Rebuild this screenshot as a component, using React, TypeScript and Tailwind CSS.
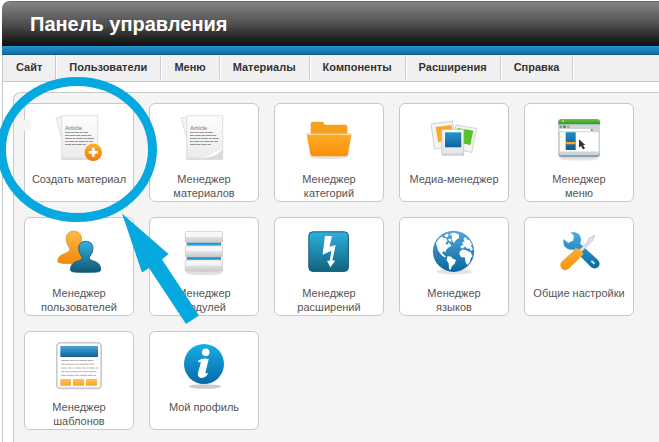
import type { ReactNode } from "react";

const menuItems = ["Сайт", "Пользователи", "Меню", "Материалы", "Компоненты", "Расширения", "Справка"];

const shortcuts: { label: string; icon: ReactNode }[] = [
	{ label: "Создать материал", icon: <ArticleIcon isNew /> },
	{ label: "Менеджер\nматериалов", icon: <ArticleIcon /> },
	{ label: "Менеджер\nкатегорий", icon: <FolderIcon /> },
	{ label: "Медиа-менеджер", icon: <PhotosIcon /> },
	{ label: "Менеджер\nменю", icon: <BrowserIcon /> },
	{ label: "Менеджер\nпользователей", icon: <UsersIcon /> },
	{ label: "Менеджер\nмодулей", icon: <ModulesIcon /> },
	{ label: "Менеджер\nрасширений", icon: <BoltIcon /> },
	{ label: "Менеджер\nязыков", icon: <GlobeIcon /> },
	{ label: "Общие настройки", icon: <ToolsIcon /> },
	{ label: "Менеджер\nшаблонов", icon: <TemplateIcon /> },
	{ label: "Мой профиль", icon: <InfoIcon /> },
];

export default function App() {
	return (
		<div className="relative flex min-h-screen flex-col overflow-hidden bg-white pt-px pl-0.5 font-['Liberation_Sans',Arial,sans-serif]">
			<header className="flex h-[45px] items-center rounded-tl-lg border-t border-[#666] bg-linear-to-b from-[#858585] via-[#505050] to-[#0e0e0e] pl-7">
				<h1 className="text-xl leading-6 font-bold text-white">Панель управления</h1>
			</header>
			<div className="h-[9px] border-b border-[#17597f] bg-linear-to-b from-[#2394cf] to-[#0c6eaa]" />

			<div className="flex flex-1 flex-col border-l border-[#c6c6c6]">
				<nav className="border-b border-[#c8c8c8] bg-[#f0f0f0] pb-0.5">
					<ul className="flex">
						{menuItems.map((item) => (
							<li key={item} className="border-r border-[#ccc] shadow-[1px_0_0_#fff]">
								<a href="#" className="block px-[13px] py-1 text-[11px] leading-4 font-bold text-[#333]">
									{item}
								</a>
							</li>
						))}
					</ul>
				</nav>

				<main className="mt-2.5 ml-2.5 flex-1 rounded-tl-lg border-t border-l border-[#c8c8c8] bg-[#f4f4f4] p-2.5">
					<div className="flex flex-wrap gap-[15px]">
						{shortcuts.map(({ label, icon }) => (
							<a
								key={label}
								href="#"
								className="flex h-[99px] w-[110px] flex-col items-center gap-2.5 rounded-md border border-[#c8c8c8] bg-white pt-2.5 text-center text-[11px] leading-[14px] whitespace-pre-line text-[#555]"
							>
								{icon}
								<span>{label}</span>
							</a>
						))}
					</div>
				</main>
			</div>

			<Highlight />
		</div>
	);
}

// Hand-drawn ring and arrow pointing at the first shortcut
function Highlight() {
	return (
		<svg
			className="pointer-events-none absolute top-0 left-0"
			width="230"
			height="340"
			viewBox="0 0 230 340"
			aria-hidden="true"
		>
			<circle cx="26" cy="125" r="6" fill="#f5f5f5" />
			<ellipse cx="77" cy="149.5" rx="75.5" ry="68" fill="none" stroke="#05a9df" strokeWidth="9" />
			<path d="M122 213.5 168.5 254 162 259.5 199 315.5 186 324 149 268 142 272.5Z" fill="#05a9df" />
		</svg>
	);
}

function Icon({ children }: { children: ReactNode }) {
	return (
		<svg className="size-12 shrink-0" viewBox="0 0 48 48" fill="none" aria-hidden="true">
			{children}
		</svg>
	);
}

function Gradient({ id, from, to }: { id: string; from: string; to: string }) {
	return (
		<linearGradient id={id} x1="0" y1="0" x2="0" y2="1">
			<stop stopColor={from} />
			<stop offset="1" stopColor={to} />
		</linearGradient>
	);
}

function ArticleIcon({ isNew = false }: { isNew?: boolean }) {
	return (
		<Icon>
			<defs>
				<Gradient id="paper" from="#fdfdfd" to="#ebebeb" />
				<Gradient id="badge" from="#fbb02c" to="#f47a08" />
			</defs>
			<path d="M1.300 4 7 2.500V26Z" fill="#f4f4f4" stroke="#d6d6d6" strokeWidth=".8" />
			<path d="M6.500 45H43" stroke="#bdbdbd" strokeWidth="1.200" />
			<path d="M6.700 1.700H42.700V44.200H6.700Z" fill="url(#paper)" stroke="#d8d8d8" strokeWidth=".8" />
			<text x="10" y="15.500" fill="#909090" fontSize="5.500" fontWeight="bold">
				Article
			</text>
			<g stroke="#8c8c8c" strokeWidth=".9">
				<path d="M10 18.500H33" strokeDasharray="5 .6 3 .6" />
				<path d="M10 21.500H37" strokeDasharray="4 .6 6 .6" />
				<path d="M10 24.500H39" strokeDasharray="7 .6 3 .6" />
				<path d="M10 27.500H38" strokeDasharray="3 .6 6 .6" />
				<path d="M10 30.500H31" strokeDasharray="6 .6 4 .6" />
			</g>
			{isNew ? (
				<>
					<circle cx="38.300" cy="38.300" r="8.700" fill="url(#badge)" />
					<path d="M38.300 33.800v9M33.800 38.300h9" stroke="#fff" strokeWidth="2.800" />
				</>
			) : (
				<>
					<path d="M22 44.200Q36 42 42.700 34V44.200Z" fill="#d9d9d9" />
					<path d="M20 44.200Q31 42.500 34.500 37.800 38 38.500 42.700 33 41 43 20 44.200Z" fill="#fff" />
				</>
			)}
		</Icon>
	);
}

function FolderIcon() {
	return (
		<Icon>
			<defs>
				<Gradient id="folder-front" from="#ffad2a" to="#fb900a" />
			</defs>
			<ellipse cx="24" cy="43" rx="19" ry="2" fill="#e4e4e4" />
			<path
				d="M5.700 24V9.500Q5.700 7.700 7.500 7.700H17.500Q19 7.700 19.500 10.700H40.500Q42.300 10.700 42.300 12.500V24Z"
				fill="#f7a01e"
			/>
			<path
				d="M1.700 20.500Q1.700 19.500 3 19.500H45.300Q46.700 19.500 46.400 21L43 40.500Q42.700 42.200 41 42.200H7.500Q5.800 42.200 5.400 40.500Z"
				fill="url(#folder-front)"
			/>
			<path d="M2.200 20.300H46.200" stroke="#ffd793" strokeWidth="1.300" />
		</Icon>
	);
}

function PhotosIcon() {
	return (
		<Icon>
			<defs>
				<Gradient id="photo" from="#2a93cc" to="#0d659f" />
				<Gradient id="photo-frame" from="#fff" to="#e4e4e4" />
			</defs>
			<path d="M1 10 22.500 7 26 32 4.500 35Z" fill="#f4f4f4" stroke="#c8c8c8" strokeWidth=".8" />
			<path d="M5.700 13 21.500 11 24 26 8 28Z" fill="#fca92b" />
			<path d="M26 11 46.700 14.500 41.700 38.500 22 34Z" fill="#f4f4f4" stroke="#c8c8c8" strokeWidth=".8" />
			<path d="M27.500 14 43.300 16.800 40.300 31 26 28Z" fill="#55c41f" />
			<path d="M12 41H34" stroke="#c4c4c4" strokeWidth="1.200" />
			<path d="M11.800 15.500H33.700V40.300H11.800Z" fill="url(#photo-frame)" stroke="#c4c4c4" strokeWidth=".8" />
			<path d="M15 18.300H31.300V33.300H15Z" fill="url(#photo)" />
		</Icon>
	);
}

function BrowserIcon() {
	return (
		<Icon>
			<defs>
				<Gradient id="browser-bar" from="#74c145" to="#2b9a27" />
				<Gradient id="browser-block" from="#2488bd" to="#0b608f" />
			</defs>
			<ellipse cx="24" cy="44.500" rx="20" ry="2" fill="#e4e4e4" />
			<rect x="3.300" y="6" width="41.700" height="37.300" rx="3.500" fill="#94a1ad" />
			<rect x="3.300" y="6" width="41.700" height="35" rx="3" fill="#cdd5dc" />
			<path d="M3.300 10.200V8Q3.300 5 6.300 5H42Q45 5 45 8V10.200Z" fill="url(#browser-bar)" />
			<path d="M6.500 7.500 8 6 9.500 7.500Z" fill="#d8f0c8" />
			<path d="M4.500 11.500h2.600v2.400H4.500Z" fill="#7aa947" />
			<path d="M8.200 11.500h2.600v2.400H8.200Z" fill="#1d7ec0" />
			<path d="M12 11.500h2.600v2.400H12Z" fill="#f08c52" />
			<path d="M4.300 15H35.500V17.200H4.300Z" fill="#fff" />
			<circle cx="36.800" cy="16" r="1" fill="#6e9b5c" />
			<path d="M5 18.200H43.500V37.500H5Z" fill="#fff" />
			<path d="M10.700 18.200H20.700V36H10.700Z" fill="url(#browser-block)" />
			<path d="M10.700 28H20.700V30.300H10.700Z" fill="#fba92b" />
			<path d="M24 25.300V33.500L26 32 28 35.500 30 34.300 28 31H30.300Z" fill="#333" />
		</Icon>
	);
}

function UsersIcon() {
	return (
		<Icon>
			<defs>
				<Gradient id="user-back" from="#fdbb45" to="#ef8a0b" />
				<Gradient id="user-front" from="#36b0df" to="#105876" />
			</defs>
			<path
				d="M18.700 3.200C13.500 3.200 11 7 11.200 11 11.300 15 13 17.500 14.300 19.500 15.500 22 14.500 23.500 11 25 6 27 2.800 28.500 2.800 33.500Q3 35.500 14 35.500H31V24Q22.500 23 23.500 19.500C25.500 17 26.500 14 26.500 10.500 26.500 6 23.500 3.200 18.700 3.200Z"
				fill="url(#user-back)"
				stroke="#dd8a1b"
				strokeWidth=".7"
			/>
			<path
				d="M30.700 13.300C26 13.300 23.500 16.500 23.700 20.300 23.800 24 25.300 26.300 26.500 28.200 27.800 30.500 27 31.800 23 33 18.500 34.500 15.500 36.500 15.500 42 15.700 44.300 21 44.300 30.700 44.300S45.500 44.300 45.700 42C45.700 36.500 43 34.500 38.500 33 34.500 31.800 33.700 30.500 35 28.200 36.500 26.300 37.800 24 37.900 20.300 38 16.500 35.500 13.300 30.700 13.300Z"
				fill="url(#user-front)"
				stroke="#185e7a"
				strokeWidth=".9"
			/>
		</Icon>
	);
}

function ModulesIcon() {
	return (
		<Icon>
			<defs>
				<Gradient id="module" from="#fafafa" to="#c9c9cd" />
			</defs>
			<ellipse cx="24" cy="45" rx="18" ry="2" fill="#e0e0e0" />
			<path d="M6.700 13H41V34H6.700Z" fill="#26a3dc" />
			<path d="M7 15.300H40.700M7 29.800H40.700" stroke="#0d72a8" strokeWidth=".8" />
			{[3.5, 17.8, 32].map((y) => (
				<g key={y}>
					<rect x="5.300" y={y} width="37.200" height="11.300" rx="1" fill="url(#module)" stroke="#c2c2c6" strokeWidth=".6" />
					<rect x="6" y={y + 1} width="35.700" height="4.500" fill="#fff" opacity=".6" />
				</g>
			))}
		</Icon>
	);
}

function BoltIcon() {
	return (
		<Icon>
			<defs>
				<Gradient id="bolt-tile" from="#2fb0dc" to="#11627f" />
			</defs>
			<rect x="3.800" y="3.800" width="39.600" height="39.600" rx="4" fill="url(#bolt-tile)" stroke="#155c76" />
			<path
				d="M20 8H27L24.500 18.800 30.700 17 27.300 32.300 30.300 32.700 25.300 39.300 22 32.700 24.700 32.700 26.500 22.700 17.500 26.700Z"
				fill="#fff"
			/>
		</Icon>
	);
}

function GlobeIcon() {
	return (
		<Icon>
			<defs>
				<Gradient id="globe" from="#52a6dc" to="#0b679f" />
			</defs>
			<ellipse cx="24" cy="43.500" rx="18" ry="3" fill="#e4e4e4" />
			<circle cx="23.500" cy="23.300" r="20.600" fill="url(#globe)" />
			<g fill="#fff">
				<path d="M6 15 9 10.500 12 8.500 13.500 10 16 10 17.500 13 15.500 15 17 17 19 14.500 21.500 18 18.500 19.500 16 22 15.500 24.500 13.500 23 12 25 14 27 16 28.500 14.500 29.500 11 26.500 8 22.500 7 18.500Z" />
				<path d="M14 8 17 5.500 19 7 17 9.500ZM18 11 20.500 10.500 21.500 14 19 13Z" />
				<path d="M19.500 6 24 4.500 29 6.500 29 10 26 12 24 15 21.500 11.500 22 8Z" />
				<path d="M17.500 28.300 21 28.500 22.500 30.500 26 32 24.500 36 22 38 20.500 42 19 41 18.700 35.500 16.500 32Z" />
				<path d="M30.500 20 31 17.500 33.500 17 32 14.500 34.500 13.500 33.500 10.500 35.500 9 37 11.500 39.500 12 42 16.500 41 18 43 21.500 41 23 39 20 37.500 21 35 18.500 33 20.500Z" />
				<path d="M30 23 33 21.500 36 22 38.500 23.500 40.500 24 42.500 28 40.500 30.500 40 34 37.500 37 35.500 34.500 35 29.500 31 29 29.300 26Z" />
			</g>
		</Icon>
	);
}

function ToolsIcon() {
	return (
		<Icon>
			<defs>
				<Gradient id="wrench" from="#48aee0" to="#0869a1" />
				<Gradient id="handle" from="#fcb13a" to="#f7930f" />
			</defs>
			<path
				d="M15.500 4.200H20Q25.500 5.500 26 11 26.200 13.500 25 15.500L43 32Q46 35.500 43.500 38.800 40 42 36 39L18.500 21.500Q13 22.500 9.700 18.800 7.700 15.500 8.500 11L13.300 15 18.300 12.500 18.800 7.500Z"
				fill="url(#wrench)"
			/>
			<path d="M37 33.500 39 35.300" stroke="#c8e8f5" strokeWidth="2" strokeLinecap="round" />
			<path d="M24 22 32.500 14.500 34 10.500 39.500 7.500 37.500 12.500 34 15.800 26.500 24Z" fill="#e4e4ea" stroke="#b2b2bb" strokeWidth=".7" />
			<path
				d="M20.500 19.500 23 21 25.500 20.700 26.500 24 28.500 25.500 26.500 28.500 13.500 41Q10 43.500 6.500 40.500 4 36.500 6.500 33.800L19.500 22Z"
				fill="url(#handle)"
			/>
		</Icon>
	);
}

function TemplateIcon() {
	return (
		<Icon>
			<defs>
				<Gradient id="banner" from="#4ba5d6" to="#0e639c" />
				<Gradient id="tile" from="#fdc24d" to="#fba62c" />
			</defs>
			<rect x="1.800" y=".8" width="44.400" height="45.600" rx="3.500" fill="#fff" stroke="#c8c8cc" strokeWidth="1.600" />
			<path d="M5.300 4H43V15H5.300Z" fill="url(#banner)" />
			<g stroke="#a0a0a0" strokeWidth=".8">
				<path d="M6 18.500H39" strokeDasharray="8 .7 5 .7 3 .7" />
				<path d="M6 22.200H40" strokeDasharray="4 .7 9 .7" />
				<path d="M6 26H43" strokeDasharray="6 .7 4 .7 2 .7" />
				<path d="M6 29.700H42" strokeDasharray="3 .7 5 .7 8 .7" />
				<path d="M6 33.400H41" strokeDasharray="5 .7 7 .7" />
			</g>
			<path d="M5.300 37H16V43.700H5.300ZM18 37H29V43.700H18ZM31 37H42V43.700H31Z" fill="url(#tile)" />
		</Icon>
	);
}

function InfoIcon() {
	return (
		<Icon>
			<defs>
				<Gradient id="info" from="#14aee6" to="#0869a6" />
			</defs>
			<ellipse cx="25" cy="44.500" rx="16" ry="2.300" fill="#ccc" />
			<circle cx="24" cy="22" r="20" fill="url(#info)" />
			<circle cx="25.700" cy="10.300" r="3.800" fill="#fff" />
			<path
				d="M18.300 18.500Q23 15.500 28.700 17L25.500 30.500Q25.200 32.300 28.300 30.500 26.500 35.700 21.500 36 17 35.700 18 31L20.700 21Q21 19 18 20.500Z"
				fill="#fff"
			/>
		</Icon>
	);
}
